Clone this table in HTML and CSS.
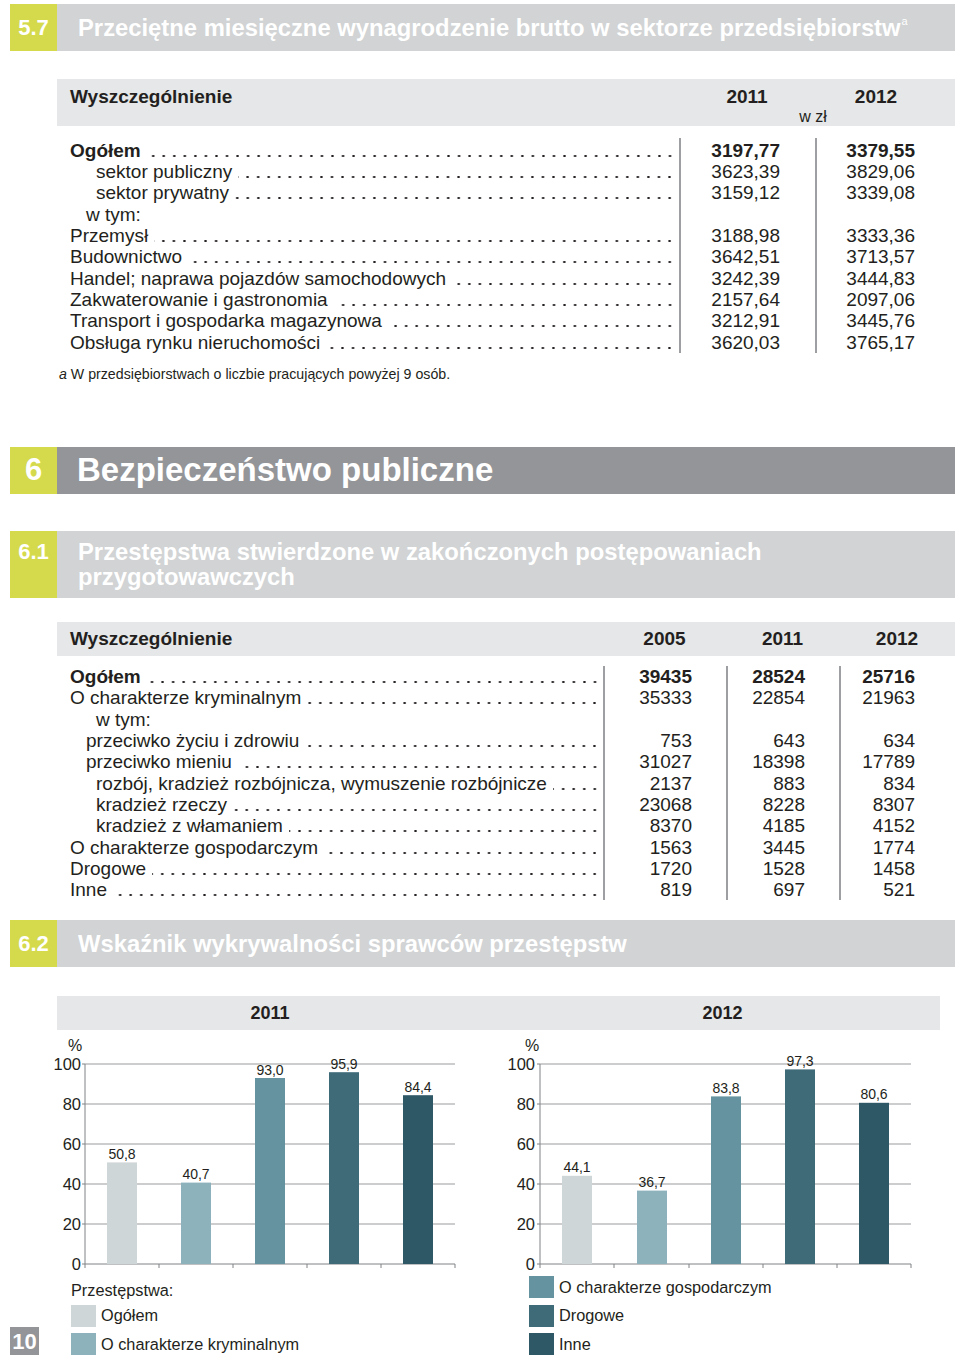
FILE: index.html
```html
<!DOCTYPE html>
<html lang="pl">
<head>
<meta charset="utf-8">
<title>Wynagrodzenia i bezpieczeństwo publiczne</title>
<link rel="stylesheet" href="styles.css">
</head>
<body>
<div class="page">

  <header class="sec sec-light">
    <div class="sec-num">5.7</div>
    <h2 class="sec-title">Przeciętne miesięczne wynagrodzenie brutto w sektorze przedsiębiorstw<sup class="fn">a</sup></h2>
  </header>

  <section class="t57">
    <div class="thead">
      <div class="th-label">Wyszczególnienie</div>
      <div class="th">2011</div>
      <div class="th">2012</div>
      <div class="unit">w zł</div>
    </div>
    <div class="tbody">
      <div class="col col-label">
        <div class="row b"><span class="lbl">Ogółem</span><span class="dots"></span></div>
        <div class="row i1"><span class="lbl">sektor publiczny</span><span class="dots"></span></div>
        <div class="row i1"><span class="lbl">sektor prywatny</span><span class="dots"></span></div>
        <div class="row i2"><span class="lbl">w tym:</span></div>
        <div class="row"><span class="lbl">Przemysł</span><span class="dots"></span></div>
        <div class="row"><span class="lbl">Budownictwo</span><span class="dots"></span></div>
        <div class="row"><span class="lbl">Handel; naprawa pojazdów samochodowych</span><span class="dots"></span></div>
        <div class="row"><span class="lbl">Zakwaterowanie i gastronomia</span><span class="dots"></span></div>
        <div class="row"><span class="lbl">Transport i gospodarka magazynowa</span><span class="dots"></span></div>
        <div class="row"><span class="lbl">Obsługa rynku nieruchomości</span><span class="dots"></span></div>
      </div>
      <div class="col col-val v1">
        <div class="b">3197,77</div>
        <div>3623,39</div>
        <div>3159,12</div>
        <div>&nbsp;</div>
        <div>3188,98</div>
        <div>3642,51</div>
        <div>3242,39</div>
        <div>2157,64</div>
        <div>3212,91</div>
        <div>3620,03</div>
      </div>
      <div class="col col-val v2">
        <div class="b">3379,55</div>
        <div>3829,06</div>
        <div>3339,08</div>
        <div>&nbsp;</div>
        <div>3333,36</div>
        <div>3713,57</div>
        <div>3444,83</div>
        <div>2097,06</div>
        <div>3445,76</div>
        <div>3765,17</div>
      </div>
    </div>
    <p class="footnote"><i>a</i> W przedsiębiorstwach o liczbie pracujących powyżej 9 osób.</p>
  </section>

  <header class="sec sec-dark">
    <div class="sec-num">6</div>
    <h1 class="sec-title">Bezpieczeństwo publiczne</h1>
  </header>

  <header class="sec sec-light sec-tall">
    <div class="sec-num">6.1</div>
    <h2 class="sec-title">Przestępstwa stwierdzone w zakończonych postępowaniach<br>przygotowawczych</h2>
  </header>

  <section class="t61">
    <div class="thead">
      <div class="th-label">Wyszczególnienie</div>
      <div class="th">2005</div>
      <div class="th">2011</div>
      <div class="th">2012</div>
    </div>
    <div class="tbody">
      <div class="col col-label">
        <div class="row b"><span class="lbl">Ogółem</span><span class="dots"></span></div>
        <div class="row"><span class="lbl">O charakterze kryminalnym</span><span class="dots"></span></div>
        <div class="row i1"><span class="lbl">w tym:</span></div>
        <div class="row i2"><span class="lbl">przeciwko życiu i zdrowiu</span><span class="dots"></span></div>
        <div class="row i2"><span class="lbl">przeciwko mieniu</span><span class="dots"></span></div>
        <div class="row i1"><span class="lbl">rozbój, kradzież rozbójnicza, wymuszenie rozbójnicze</span><span class="dots"></span></div>
        <div class="row i1"><span class="lbl">kradzież rzeczy</span><span class="dots"></span></div>
        <div class="row i1"><span class="lbl">kradzież z włamaniem</span><span class="dots"></span></div>
        <div class="row"><span class="lbl">O charakterze gospodarczym</span><span class="dots"></span></div>
        <div class="row"><span class="lbl">Drogowe</span><span class="dots"></span></div>
        <div class="row"><span class="lbl">Inne</span><span class="dots"></span></div>
      </div>
      <div class="col col-val w1">
        <div class="b">39435</div><div>35333</div><div>&nbsp;</div><div>753</div><div>31027</div><div>2137</div><div>23068</div><div>8370</div><div>1563</div><div>1720</div><div>819</div>
      </div>
      <div class="col col-val w2">
        <div class="b">28524</div><div>22854</div><div>&nbsp;</div><div>643</div><div>18398</div><div>883</div><div>8228</div><div>4185</div><div>3445</div><div>1528</div><div>697</div>
      </div>
      <div class="col col-val w3">
        <div class="b">25716</div><div>21963</div><div>&nbsp;</div><div>634</div><div>17789</div><div>834</div><div>8307</div><div>4152</div><div>1774</div><div>1458</div><div>521</div>
      </div>
    </div>
  </section>

  <header class="sec sec-light">
    <div class="sec-num">6.2</div>
    <h2 class="sec-title">Wskaźnik wykrywalności sprawców przestępstw</h2>
  </header>

  <section class="charts">
    <div class="chart-head">
      <div class="ch ch1">2011</div>
      <div class="ch ch2">2012</div>
    </div>
    <div class="chart-body">
      <svg class="chart chart-a" width="436" height="244" viewBox="-10 0 436 244">
        <g class="grid">
          <line x1="28" y1="34" x2="398" y2="34"/>
          <line x1="28" y1="74" x2="398" y2="74"/>
          <line x1="28" y1="114" x2="398" y2="114"/>
          <line x1="28" y1="154" x2="398" y2="154"/>
          <line x1="28" y1="194" x2="398" y2="194"/>
        </g>
        <g class="axis">
          <line x1="28" y1="34" x2="28" y2="234"/>
          <line x1="28" y1="234" x2="398" y2="234"/>
          <line x1="25" y1="34" x2="28" y2="34"/>
          <line x1="25" y1="74" x2="28" y2="74"/>
          <line x1="25" y1="114" x2="28" y2="114"/>
          <line x1="25" y1="154" x2="28" y2="154"/>
          <line x1="25" y1="194" x2="28" y2="194"/>
          <line x1="25" y1="234" x2="28" y2="234"/>
          <line x1="28" y1="234" x2="28" y2="238"/>
          <line x1="102" y1="234" x2="102" y2="238"/>
          <line x1="176" y1="234" x2="176" y2="238"/>
          <line x1="250" y1="234" x2="250" y2="238"/>
          <line x1="324" y1="234" x2="324" y2="238"/>
          <line x1="398" y1="234" x2="398" y2="238"/>
        </g>
        <text class="unit-lab" x="11" y="21">%</text>
        <g class="ylab">
          <text x="24" y="40">100</text>
          <text x="24" y="80">80</text>
          <text x="24" y="120">60</text>
          <text x="24" y="160">40</text>
          <text x="24" y="200">20</text>
          <text x="24" y="240">0</text>
        </g>
        <rect class="c1" x="50" y="132.4" width="30" height="101.6"/>
        <rect class="c2" x="124" y="152.6" width="30" height="81.4"/>
        <rect class="c3" x="198" y="48" width="30" height="186"/>
        <rect class="c4" x="272" y="42.2" width="30" height="191.8"/>
        <rect class="c5" x="346" y="65.2" width="30" height="168.8"/>
        <g class="vlab">
          <text x="65" y="129">50,8</text>
          <text x="139" y="149">40,7</text>
          <text x="213" y="45">93,0</text>
          <text x="287" y="39">95,9</text>
          <text x="361" y="62">84,4</text>
        </g>
      </svg>
      <svg class="chart" width="457" height="244" viewBox="0 0 457 244">
        <g class="grid">
          <line x1="57" y1="34" x2="428" y2="34"/>
          <line x1="57" y1="74" x2="428" y2="74"/>
          <line x1="57" y1="114" x2="428" y2="114"/>
          <line x1="57" y1="154" x2="428" y2="154"/>
          <line x1="57" y1="194" x2="428" y2="194"/>
        </g>
        <g class="axis">
          <line x1="57" y1="34" x2="57" y2="234"/>
          <line x1="57" y1="234" x2="428" y2="234"/>
          <line x1="54" y1="34" x2="57" y2="34"/>
          <line x1="54" y1="74" x2="57" y2="74"/>
          <line x1="54" y1="114" x2="57" y2="114"/>
          <line x1="54" y1="154" x2="57" y2="154"/>
          <line x1="54" y1="194" x2="57" y2="194"/>
          <line x1="54" y1="234" x2="57" y2="234"/>
          <line x1="57" y1="234" x2="57" y2="238"/>
          <line x1="131" y1="234" x2="131" y2="238"/>
          <line x1="206" y1="234" x2="206" y2="238"/>
          <line x1="280" y1="234" x2="280" y2="238"/>
          <line x1="354" y1="234" x2="354" y2="238"/>
          <line x1="428" y1="234" x2="428" y2="238"/>
        </g>
        <text class="unit-lab" x="42" y="21">%</text>
        <g class="ylab">
          <text x="52" y="40">100</text>
          <text x="52" y="80">80</text>
          <text x="52" y="120">60</text>
          <text x="52" y="160">40</text>
          <text x="52" y="200">20</text>
          <text x="52" y="240">0</text>
        </g>
        <rect class="c1" x="79" y="145.8" width="30" height="88.2"/>
        <rect class="c2" x="154" y="160.6" width="30" height="73.4"/>
        <rect class="c3" x="228" y="66.4" width="30" height="167.6"/>
        <rect class="c4" x="302" y="39.4" width="30" height="194.6"/>
        <rect class="c5" x="376" y="72.8" width="30" height="161.2"/>
        <g class="vlab">
          <text x="94" y="142">44,1</text>
          <text x="169" y="157">36,7</text>
          <text x="243" y="63">83,8</text>
          <text x="317" y="36">97,3</text>
          <text x="391" y="69">80,6</text>
        </g>
      </svg>
    </div>
  </section>

  <footer class="bottom">
    <div class="pnum-wrap"><div class="pnum">10</div></div>
    <div class="legend legend-left">
      <div class="leg-title">Przestępstwa:</div>
      <div class="leg-item"><span class="sw s1"></span>Ogółem</div>
      <div class="leg-item"><span class="sw s2"></span>O charakterze kryminalnym</div>
    </div>
    <div class="legend legend-right">
      <div class="leg-item"><span class="sw s3"></span>O charakterze gospodarczym</div>
      <div class="leg-item"><span class="sw s4"></span>Drogowe</div>
      <div class="leg-item"><span class="sw s5"></span>Inne</div>
    </div>
  </footer>

</div>
</body>
</html>
```

FILE: styles.css
```css
* { box-sizing: border-box; }

body {
  margin: 0;
  background: #fff;
  color: #231f20;
  font-family: "Liberation Sans", Arial, sans-serif;
}

.page {
  width: 960px;
  padding: 4px 5px 0 10px;
}

/* ---------- section bars ---------- */
.sec {
  display: flex;
  height: 47px;
  background: #d1d3d4;
  color: #fff;
  font-weight: bold;
}
.sec-num {
  flex: none;
  width: 47px;
  background: #d4da4c;
  display: flex;
  align-items: center;
  justify-content: center;
  font-size: 22px;
}
.sec-title {
  margin: 0;
  padding-left: 21px;
  display: flex;
  align-items: center;
  font-size: 23.8px;
  font-weight: bold;
  white-space: nowrap;
}
.fn {
  font-size: 11px;
  font-weight: normal;
  align-self: flex-start;
  margin-top: 12px;
  margin-left: 1px;
  line-height: 1;
}
.sec-dark {
  background: #939598;
  margin-top: 65px;
}
.sec-dark .sec-num { font-size: 31px; }
.sec-dark .sec-title { font-size: 33px; padding-left: 20px; }

.sec-tall {
  height: 67px;
  margin-top: 37px;
}
.sec-tall .sec-num {
  align-items: flex-start;
  padding-top: 8.5px;
  line-height: 25px;
}
.sec-tall .sec-title {
  display: block;
  line-height: 25px;
  padding-top: 8px;
}

/* ---------- tables ---------- */
.thead {
  display: grid;
  margin-left: 47px;
  padding-left: 13px;
  background: #e6e7e8;
  font-size: 19px;
  font-weight: bold;
}
.th { text-align: center; }

.tbody {
  display: flex;
  margin-left: 47px;
  padding-left: 13px;
  font-size: 19px;
  line-height: 21.33px;
}
.col > div { height: 21.33px; white-space: nowrap; }
.col-val {
  border-left: 2px solid #9d9fa2;
  text-align: right;
}
.b { font-weight: bold; }

.row { display: flex; }
.lbl { flex: none; }
.dots {
  flex: 1;
  margin-left: 6px;
  margin-right: 4px;
  background-image: radial-gradient(circle at center, #231f20 0.95px, transparent 1.35px);
  background-size: 10.56px 4px;
  background-repeat: repeat-x;
  background-position: right 0 top 14px;
}
.i1 { padding-left: 26px; }
.i2 { padding-left: 16px; }

/* table 5.7 */
.t57 .thead {
  margin-top: 28px;
  height: 47px;
  padding-top: 7px;
  grid-template-columns: 609px 136px 122px;
  line-height: 21px;
}
.t57 .unit {
  grid-column: 2 / 4;
  text-align: center;
  padding-left: 10px;
  font-size: 16px;
  font-weight: normal;
  line-height: 19px;
}
.t57 .tbody { margin-top: 12px; }
.t57 .col { padding-top: 1.6px; }
.t57 .col-label { width: 609px; }
.t57 .v1 { width: 136px; padding-right: 35px; }
.t57 .v2 { width: 122px; padding-right: 22px; }

.footnote {
  margin: 13px 0 0 49px;
  font-size: 14.2px;
  line-height: 16px;
}

/* table 6.1 */
.t61 .thead {
  margin-top: 24px;
  height: 34px;
  line-height: 34px;
  grid-template-columns: 533px 123px 113px 116px;
}
.t61 .tbody { margin-top: 10px; }
.t61 .col-label { width: 533px; }
.t61 .dots { margin-right: 3px; }
.t61 .w1 { width: 123px; padding-right: 34px; }
.t61 .w2 { width: 113px; padding-right: 34px; }
.t61 .w3 { width: 116px; padding-right: 40px; }

.t61 + .sec { margin-top: 20px; }

/* ---------- charts ---------- */
.charts {
  margin: 29px 0 0 47px;
  width: 883px;
}
.chart-head {
  display: flex;
  height: 34px;
  line-height: 34px;
  background: #e6e7e8;
  font-size: 18px;
  font-weight: bold;
}
.ch { text-align: center; }
.ch1 { width: 426px; }
.ch2 { width: 457px; padding-left: 22px; }

.chart-body {
  display: flex;
  margin-left: -10px;
}
.chart { display: block; flex: none; font-family: "Liberation Sans", Arial, sans-serif; }
.grid line { stroke: #9a9b9d; stroke-width: 1; }
.axis line { stroke: #808285; stroke-width: 1; }
.unit-lab { font-size: 16px; fill: #231f20; text-anchor: start; }
.ylab text { font-size: 16.5px; fill: #231f20; text-anchor: end; }
.vlab text { font-size: 14px; fill: #231f20; text-anchor: middle; }
.c1 { fill: #cfd6d7; }
.c2 { fill: #8db2bc; }
.c3 { fill: #6593a0; }
.c4 { fill: #3f6b79; }
.c5 { fill: #2f5867; }

/* ---------- legend / footer ---------- */
.bottom {
  display: flex;
  margin-top: 2px;
}
.pnum-wrap {
  flex: none;
  width: 47px;
  display: flex;
  align-items: flex-end;
}
.pnum {
  width: 29px;
  height: 30px;
  margin-bottom: -2px;
  background: #939598;
  color: #fff;
  font-weight: bold;
  font-size: 22px;
  display: flex;
  align-items: center;
  justify-content: center;
}
.legend {
  display: flex;
  flex-direction: column;
  gap: 6.5px;
  font-size: 16.3px;
}
.legend-left { width: 426px; padding-left: 14px; }
.legend-right { padding-left: 46px; }
.leg-title {
  height: 22px;
  line-height: 22px;
  margin-top: 3px;
  margin-bottom: -3px;
}
.leg-item {
  display: flex;
  align-items: center;
  height: 22px;
}
.sw {
  flex: none;
  width: 25px;
  height: 22px;
  margin-right: 5px;
}
.s1 { background: #cfd6d7; }
.s2 { background: #8db2bc; }
.s3 { background: #6593a0; }
.s4 { background: #3f6b79; }
.s5 { background: #2f5867; }
```
